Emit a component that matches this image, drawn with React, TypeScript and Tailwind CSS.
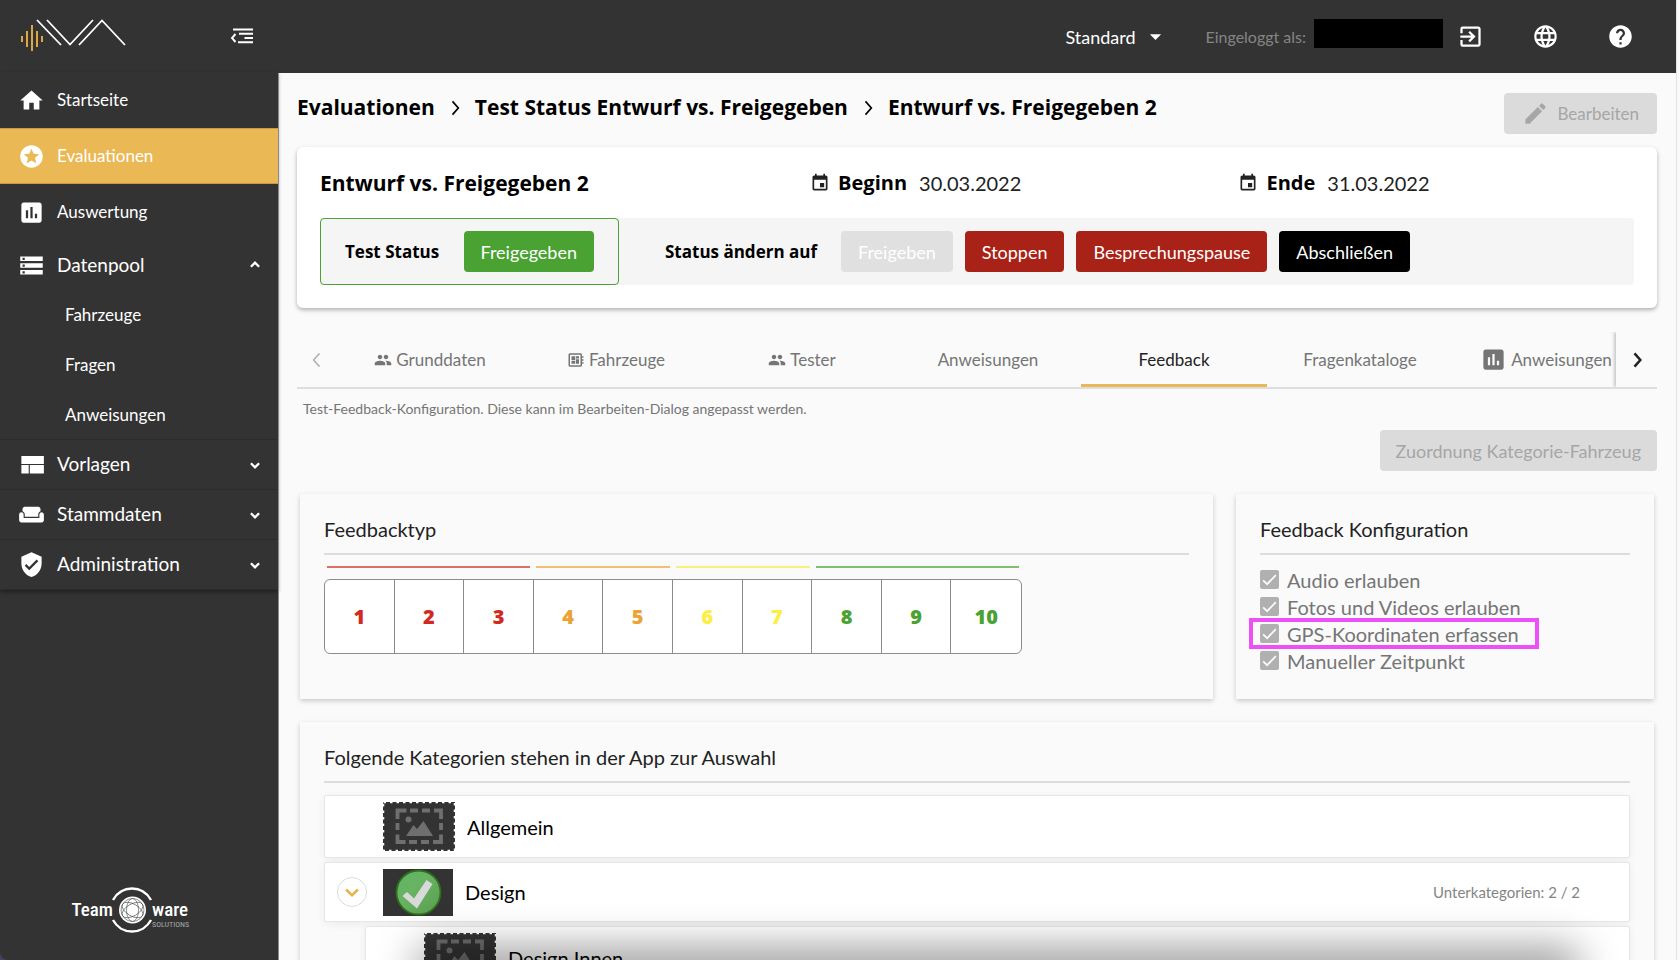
import type { ReactNode } from 'react';
import {
  MdArrowDropDown,
  MdAssessment,
  MdEdit,
  MdEvent,
  MdExitToApp,
  MdHelp,
  MdHome,
  MdLanguage,
  MdOutlineDeveloperBoard,
  MdPeople,
  MdStars,
  MdStorage,
  MdVerifiedUser,
  MdWeekend,
} from 'react-icons/md';

type Direction = 'left' | 'right' | 'up' | 'down';

const chevronPaths: Record<Direction, string> = {
  left: 'M15 4 L8 12 L15 20',
  right: 'M9 4 L16 12 L9 20',
  up: 'M5 15 L12 8 L19 15',
  down: 'M5 9 L12 16 L19 9',
};

function Chevron({ dir, className, stroke = 2 }: { dir: Direction; className?: string; stroke?: number }) {
  return (
    <svg viewBox="0 0 24 24" className={className} fill="none" stroke="currentColor" strokeWidth={stroke} aria-hidden="true">
      <path d={chevronPaths[dir]} />
    </svg>
  );
}

function BrandLogo() {
  return (
    <svg viewBox="0 0 106 36" className="h-9 w-[106px]" fill="none" aria-hidden="true">
      <g stroke="#dba845" strokeWidth="2">
        <path d="M2 18v6M7 13v16M12 7v26M17 13v16M22 18v6" />
      </g>
      <g stroke="#fff" strokeWidth="1.8">
        <path d="M17 2 L41 27" />
        <path d="M27 2 L50 26.500 L73 2" />
        <path d="M59 27 L82 2.500 L105 27" />
      </g>
    </svg>
  );
}

function CollapseIcon() {
  return (
    <svg viewBox="0 0 24 16" className="h-4 w-6" fill="none" stroke="currentColor" strokeWidth="1.900" aria-hidden="true">
      <path d="M3 1.500h20M9 5.800h14M14.500 10h8.500M8 14.300h15" />
      <path d="M5.500 6 L2 10 L5.500 14" />
    </svg>
  );
}

function TemplateIcon() {
  return (
    <svg viewBox="0 0 24 24" className="size-[27px]" fill="currentColor" aria-hidden="true">
      <path d="M3 4.500h20v7H3zM3 12.500h6.500V20H3zM10.500 12.500H23V20H10.500z" />
    </svg>
  );
}

function TeamwareLogo() {
  return (
    <svg viewBox="0 0 122 48" className="h-12 w-[122px] overflow-visible" aria-label="Teamware Solutions">
      <g fill="#fff" fontFamily="'Liberation Sans Narrow', 'Roboto Condensed', Roboto, sans-serif" fontWeight="500">
        <text x="41" y="30" fontSize="19" textAnchor="end">Team</text>
        <text x="80" y="30" fontSize="19">ware</text>
        <text x="80" y="41" fontSize="8" fontWeight="normal" fill="#aaa">SOLUTIONS</text>
      </g>
      <g fill="none" stroke="#fff" strokeWidth="2.400">
        <path d="M41 14 A 21.500 21.500 0 0 1 79 14" />
        <path d="M41 34 A 21.500 21.500 0 0 0 79 34" />
      </g>
      <circle cx="60.500" cy="24" r="13.500" fill="#fff" />
      <g fill="none" stroke="#444" strokeWidth="0.600">
        <circle cx="60.500" cy="24" r="11.500" />
        <ellipse cx="60.500" cy="24" rx="11.500" ry="6" transform="rotate(30 60.500 24)" />
        <ellipse cx="60.500" cy="24" rx="11.500" ry="6" transform="rotate(90 60.500 24)" />
        <ellipse cx="60.500" cy="24" rx="11.500" ry="6" transform="rotate(150 60.500 24)" />
      </g>
    </svg>
  );
}

function PlaceholderImage() {
  return (
    <svg viewBox="0 0 72 49" className="h-[49px] w-[72px]" aria-hidden="true">
      <rect x="0" y="0" width="72" height="49" fill="#333" />
      <rect x="0.500" y="0.500" width="71" height="48" fill="none" stroke="#fff" strokeWidth="1.500" strokeDasharray="2.500 4" />
      <path
        d="M14.500 17V8.500h9M27 8.500h8M39 8.500h8M51 8.500h7V17M58 21v7M58 32.500V40h-8M46 40h-8M34 40h-8M22.500 40h-8v-7.500M14.500 28v-7"
        fill="none"
        stroke="#6f6f6f"
        strokeWidth="3.800"
      />
      <circle cx="25.500" cy="17.500" r="3" fill="#6f6f6f" />
      <path d="M23 34 L30.500 23 L34 27 L40.500 19 L50 34Z" fill="#6f6f6f" />
    </svg>
  );
}

function CheckImage() {
  return (
    <svg viewBox="0 0 70 47" className="h-[47px] w-[70px]" aria-hidden="true">
      <defs>
        <linearGradient id="badge" x1="0" y1="0" x2="1" y2="1">
          <stop offset="0" stopColor="#5fb463" />
          <stop offset="0.400" stopColor="#67b463" />
          <stop offset="1" stopColor="#5c9c50" />
        </linearGradient>
      </defs>
      <rect width="70" height="47" fill="#333" />
      <circle cx="35.500" cy="23.500" r="22" fill="url(#badge)" stroke="#2f6f1c" strokeWidth="1.800" />
      <path d="M19.500 27 L24 23 L31 29.500 L43.500 11 L49.500 15 L34 39.500Z" fill="#d9d9d9" />
    </svg>
  );
}

type NavLinkProps = { icon: ReactNode; label: string; active?: boolean };

function NavLink({ icon, label, active }: NavLinkProps) {
  return (
    <a
      href="#"
      className={
        active
          ? 'flex h-14 items-center gap-3 border-y border-[#c89a45] bg-[#eab955] pl-[18px] text-[17px] text-white'
          : 'flex h-14 items-center gap-3 pl-[18px] text-[17px] text-white'
      }
    >
      {icon}
      {label}
    </a>
  );
}

function NavGroup({ icon, label, open, items }: { icon: ReactNode; label: string; open?: boolean; items?: string[] }) {
  return (
    <div className="border-b border-[#2c2c2c]">
      <button
        type="button"
        aria-expanded={!!open}
        className={
          open
            ? 'flex h-[50px] w-full items-center gap-3 pr-4 pl-[18px] text-left text-[19px] text-white'
            : 'flex h-[49px] w-full items-center gap-3 pr-4 pl-[18px] text-left text-[19px] text-white'
        }
      >
        {icon}
        <span className="flex-1">{label}</span>
        <Chevron dir={open ? 'up' : 'down'} className="size-3.5" stroke={4} />
      </button>
      {items?.map((item) => (
        <a key={item} href="#" className="flex h-[50px] items-center pl-[65px] text-[17px] text-white last:h-[49px]">
          {item}
        </a>
      ))}
    </div>
  );
}

function Sidebar() {
  return (
    <aside className="flex w-[278px] shrink-0 bg-[#45425e]">
      <div className="flex flex-1 flex-col rounded-bl-lg bg-[#333]">
        <div className="flex h-[72px] items-center justify-between pr-6 pl-5">
          <BrandLogo />
          <button type="button" aria-label="Menü einklappen" className="text-white">
            <CollapseIcon />
          </button>
        </div>
        <nav className="shadow-[0_2px_4px_rgba(0,0,0,0.4)]">
          <NavLink icon={<MdHome className="size-[27px]" />} label="Startseite" />
          <NavLink icon={<MdStars className="size-[27px]" />} label="Evaluationen" active />
          <NavLink icon={<MdAssessment className="size-[27px]" />} label="Auswertung" />
          <NavGroup
            icon={<MdStorage className="size-[27px]" />}
            label="Datenpool"
            open
            items={['Fahrzeuge', 'Fragen', 'Anweisungen']}
          />
          <NavGroup icon={<TemplateIcon />} label="Vorlagen" />
          <NavGroup icon={<MdWeekend className="size-[27px]" />} label="Stammdaten" />
          <NavGroup icon={<MdVerifiedUser className="size-[27px]" />} label="Administration" />
        </nav>
        <div className="mt-auto mb-[26px] pl-[72px]">
          <TeamwareLogo />
        </div>
      </div>
    </aside>
  );
}

function TopBar() {
  return (
    <header className="flex h-[73px] shrink-0 items-center justify-end bg-[#333] pr-[42px] text-white">
      <div className="relative mr-10 flex items-center">
        <select aria-label="Ansicht" className="w-[100px] appearance-none bg-transparent text-lg outline-none">
          <option>Standard</option>
        </select>
        <MdArrowDropDown className="pointer-events-none absolute -right-1 size-[27px]" />
      </div>
      <span className="mr-2 text-base text-[#858585]">Eingeloggt als:</span>
      <span className="mr-[14px] mb-1.5 h-[29px] w-[129px] bg-black" />
      <button type="button" aria-label="Abmelden" className="mr-12">
        <MdExitToApp className="size-[27px]" />
      </button>
      <button type="button" aria-label="Sprache" className="mr-12">
        <MdLanguage className="size-[27px]" />
      </button>
      <button type="button" aria-label="Hilfe">
        <MdHelp className="size-[27px]" />
      </button>
    </header>
  );
}

function DateField({ label, value }: { label: string; value: string }) {
  return (
    <div className="flex items-center gap-2 text-xl leading-9">
      <MdEvent className="size-5 text-[#222]" />
      <span className="font-['Open_Sans',sans-serif] font-bold text-black">{label}</span>
      <span className="ml-1 text-[#222]">{value}</span>
    </div>
  );
}

function StatusCard() {
  const button = 'h-[41px] rounded-[4px] px-[17px] text-lg text-white';
  return (
    <section className="mt-[13px] rounded-md bg-white px-[23px] pt-[18px] pb-[23px] shadow-[0_2px_4px_rgba(0,0,0,0.3)]">
      <div className="mb-[17px] grid grid-cols-[373fr_326fr_301fr]">
        <h2 className="font-['Open_Sans',sans-serif] text-[21px] leading-9 font-bold text-black">Entwurf vs. Freigegeben 2</h2>
        <DateField label="Beginn" value="30.03.2022" />
        <DateField label="Ende" value="31.03.2022" />
      </div>
      <div className="flex h-[67px] items-center rounded-[4px] bg-[#f5f5f5]">
        <div className="mr-[46px] flex h-full w-[299px] items-center justify-between rounded-[4px] border border-[#4aa333] px-6">
          <span className="font-['Open_Sans',sans-serif] text-[17px] font-bold text-black">Test Status</span>
          <span className="flex h-[41px] items-center rounded-[4px] bg-[#49a232] px-[17px] text-lg text-white">
            Freigegeben
          </span>
        </div>
        <span className="mr-6 font-['Open_Sans',sans-serif] text-[17px] font-bold text-black">Status ändern auf</span>
        <div className="flex gap-3">
          <button type="button" disabled className={`${button} bg-[#e0e0e0]`}>
            Freigeben
          </button>
          <button type="button" className={`${button} bg-[#a82217]`}>
            Stoppen
          </button>
          <button type="button" className={`${button} bg-[#a82217]`}>
            Besprechungspause
          </button>
          <button type="button" className={`${button} bg-black`}>
            Abschließen
          </button>
        </div>
      </div>
    </section>
  );
}

const tabs = [
  { id: 'base', label: 'Grunddaten', icon: <MdPeople className="size-[18px]" /> },
  { id: 'vehicles', label: 'Fahrzeuge', icon: <MdOutlineDeveloperBoard className="size-[18px]" /> },
  { id: 'testers', label: 'Tester', icon: <MdPeople className="size-[18px]" /> },
  { id: 'instructions', label: 'Anweisungen' },
  { id: 'feedback', label: 'Feedback', active: true },
  { id: 'catalogs', label: 'Fragenkataloge' },
  { id: 'instruction-results', label: 'Anweisungen', icon: <MdAssessment className="size-[27px]" /> },
];

function TabBar() {
  return (
    <div className="mt-6 flex h-[57px] border-b-2 border-[#dedede]">
      <button type="button" aria-label="Zurück" className="flex w-10 shrink-0 items-center justify-center text-[#b5b5b5]">
        <Chevron dir="left" className="size-5" />
      </button>
      <div role="tablist" className="flex min-w-0 flex-1 overflow-hidden">
        {tabs.map((tab) => (
          <button
            key={tab.id}
            type="button"
            role="tab"
            aria-selected={!!tab.active}
            className={
              tab.active
                ? 'flex w-[186px] shrink-0 items-center justify-center border-b-3 border-[#eab955] pt-[3px] text-[17px] text-[#222]'
                : 'flex w-[186px] shrink-0 items-center justify-center gap-1 text-[17px] text-[#757575]'
            }
          >
            {tab.icon}
            {tab.label}
          </button>
        ))}
      </div>
      <button
        type="button"
        aria-label="Weiter"
        className="flex w-[41px] shrink-0 items-center justify-center text-[#222] shadow-[-2px_0_3px_rgba(0,0,0,0.2)] [clip-path:inset(0_0_0_-6px)]"
      >
        <Chevron dir="right" className="size-5" stroke={3} />
      </button>
    </div>
  );
}

function SectionCard({ title, className, children }: { title: string; className: string; children: ReactNode }) {
  return (
    <section className={`${className} bg-[#fafafa] px-6 pt-[23px] shadow-[0_2px_5px_rgba(0,0,0,0.2)]`}>
      <h3 className="mb-3 text-xl leading-6 text-[#222]">{title}</h3>
      <hr className="h-0.5 border-0 bg-[#dcdcdc]" />
      {children}
    </section>
  );
}

const scores = [
  { value: 1, color: 'text-[#d2281e]' },
  { value: 2, color: 'text-[#d2281e]' },
  { value: 3, color: 'text-[#d2281e]' },
  { value: 4, color: 'text-[#eba337]' },
  { value: 5, color: 'text-[#eba337]' },
  { value: 6, color: 'text-[#fdee45]' },
  { value: 7, color: 'text-[#fdee45]' },
  { value: 8, color: 'text-[#49a232]' },
  { value: 9, color: 'text-[#49a232]' },
  { value: 10, color: 'text-[#49a232]' },
];

function ScoreScale() {
  return (
    <div className="mt-[11px] max-w-[698px]">
      <div className="grid grid-cols-10">
        <span className="col-span-3 mx-[3px] h-0.5 bg-[#df6e67]" />
        <span className="col-span-2 mx-[3px] h-0.5 bg-[#f1bf74]" />
        <span className="col-span-2 mx-[3px] h-0.5 bg-[#f9f07c]" />
        <span className="col-span-3 mx-[3px] h-0.5 bg-[#80bf70]" />
      </div>
      <ol className="mt-[11px] grid h-[75px] grid-cols-10 divide-x divide-[#8c8c8c] rounded-md border border-[#8c8c8c] bg-white font-['Open_Sans',sans-serif]">
        {scores.map((score) => (
          <li key={score.value} className={`flex items-center justify-center text-xl font-extrabold ${score.color}`}>
            {score.value}
          </li>
        ))}
      </ol>
    </div>
  );
}

function ConfigOption({ label, highlighted }: { label: string; highlighted?: boolean }) {
  return (
    <label className="relative flex h-[27px] w-fit items-center gap-2 text-xl text-[#757575]">
      <span className="relative size-[19px]">
        <input type="checkbox" checked disabled readOnly className="block size-[19px] appearance-none rounded-[2px] bg-[#b0b0b0]" />
        <svg viewBox="0 0 24 24" className="absolute inset-0 size-[19px]" fill="none" stroke="#fafafa" strokeWidth="2.300" aria-hidden="true">
          <path d="M4 13 L9 18 L20 6.500" />
        </svg>
      </span>
      {label}
      {highlighted && <span className="absolute -inset-y-0.5 -right-5 -left-[11px] border-4 border-[#ee50f8]" />}
    </label>
  );
}

function Categories() {
  const row = 'flex items-center rounded-[2px] border border-[#e6e6e6] bg-white text-xl text-black shadow-[0_2px_8px_rgba(0,0,0,0.06)]';
  return (
    <ul className="mt-3 flex flex-col gap-1">
      <li className={`${row} h-[63px] gap-3 pl-[58px]`}>
        <PlaceholderImage />
        Allgemein
      </li>
      <li className={`${row} h-[60px] pr-[49px] pl-3`}>
        <button
          type="button"
          aria-label="Design aufklappen"
          className="mr-4 flex size-[30px] items-center justify-center rounded-full border border-[#dcdcdc] text-[#eab04a]"
        >
          <Chevron dir="down" className="size-5" stroke={3} />
        </button>
        <CheckImage />
        <span className="ml-3 flex-1">Design</span>
        <span className="text-[15px] text-[#858585]">Unterkategorien: 2 / 2</span>
      </li>
      <li className={`${row} ml-[41px] h-[63px] gap-3 pl-[58px]`}>
        <PlaceholderImage />
        Design Innen
      </li>
    </ul>
  );
}

export default function App() {
  return (
    <div className="h-screen overflow-hidden bg-[#fafafa] font-['Lato',sans-serif]">
      <div className="relative mr-[3px] flex h-full overflow-hidden border-r border-[#e2e2e2]">
        <Sidebar />
        <div className="flex min-w-0 flex-1 flex-col">
          <TopBar />
          <main className="min-h-0 flex-1 overflow-hidden border-l border-[#8a8a8a] pt-5 pr-[19px] pl-[18px]">
            <div className="flex items-start justify-between">
              <nav
                aria-label="Breadcrumb"
                className="flex h-[30px] items-center gap-[10px] font-['Open_Sans',sans-serif] text-[21px] font-bold text-black"
              >
                <a href="#">Evaluationen</a>
                <Chevron dir="right" className="size-5" />
                <a href="#">Test Status Entwurf vs. Freigegeben</a>
                <Chevron dir="right" className="size-5" />
                <span>Entwurf vs. Freigegeben 2</span>
              </nav>
              <button
                type="button"
                disabled
                className="flex h-[41px] items-center gap-2 rounded-[4px] bg-[#dbdbdb] px-[18px] text-[17px] text-[#a6a6a6]"
              >
                <MdEdit className="size-[27px]" />
                Bearbeiten
              </button>
            </div>

            <StatusCard />
            <TabBar />

            <p className="mt-[10px] pl-[6px] text-sm leading-5 text-[#757575]">
              Test-Feedback-Konfiguration. Diese kann im Bearbeiten-Dialog angepasst werden.
            </p>
            <div className="mt-[11px] flex justify-end">
              <button type="button" disabled className="h-[41px] rounded-[4px] bg-[#dbdbdb] px-4 text-lg text-[#a6a6a6]">
                Zuordnung Kategorie-Fahrzeug
              </button>
            </div>

            <div className="mt-[23px] mr-[3px] ml-[3px] flex gap-[23px]">
              <SectionCard title="Feedbacktyp" className="min-w-0 flex-1 pb-[45px]">
                <ScoreScale />
              </SectionCard>
              <SectionCard title="Feedback Konfiguration" className="w-[418px] shrink-0">
                <div className="mt-[11px]">
                  <ConfigOption label="Audio erlauben" />
                  <ConfigOption label="Fotos und Videos erlauben" />
                  <ConfigOption label="GPS-Koordinaten erfassen" highlighted />
                  <ConfigOption label="Manueller Zeitpunkt" />
                </div>
              </SectionCard>
            </div>

            <SectionCard title="Folgende Kategorien stehen in der App zur Auswahl" className="mt-[23px] mr-[3px] ml-[3px] pb-6">
              <Categories />
            </SectionCard>
          </main>
        </div>
        {/* soft shadow rising from the lower window edge */}
        <div className="pointer-events-none absolute right-[110px] -bottom-5 left-[430px] h-5 shadow-[0_0_40px_12px_rgba(0,0,0,0.4)]" />
      </div>
    </div>
  );
}
